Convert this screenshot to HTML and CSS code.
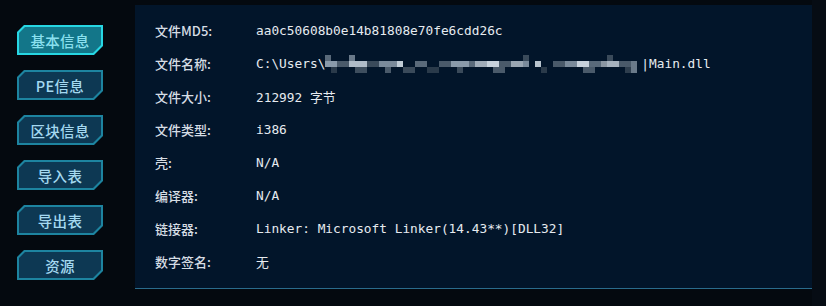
FILE: index.html
```html
<!DOCTYPE html>
<html lang="zh-CN">
<head>
<meta charset="utf-8">
<link rel="stylesheet" href="styles.css">
</head>
<body>
<div class="app">
  <nav class="sidebar">
    <div class="btn active"><div class="btn-inner">基本信息</div></div>
    <div class="btn"><div class="btn-inner">PE信息</div></div>
    <div class="btn"><div class="btn-inner">区块信息</div></div>
    <div class="btn"><div class="btn-inner">导入表</div></div>
    <div class="btn"><div class="btn-inner">导出表</div></div>
    <div class="btn"><div class="btn-inner">资源</div></div>
  </nav>
  <main class="panel">
    <div class="row"><span class="label">文件MD5:</span><span class="value">aa0c50608b0e14b81808e70fe6cdd26c</span></div>
    <div class="row"><span class="label">文件名称:</span><span class="value">C:\Users\<svg class="mosaic" width="316" height="24" viewBox="0 0 316 24">
      <rect x="0" y="3" width="6" height="6" fill="#5a6a7a"/>
      <rect x="0" y="9" width="12" height="6" fill="#8a9aaa"/>
      <rect x="6" y="15" width="6" height="6" fill="#2a3a4a"/>
      <rect x="12" y="9" width="12" height="6" fill="#4a5a6a"/>
      <rect x="24" y="3" width="6" height="6" fill="#6a7a8a"/>
      <rect x="24" y="9" width="18" height="6" fill="#b0bcc8"/>
      <rect x="30" y="15" width="12" height="6" fill="#3e4e5e"/>
      <rect x="42" y="9" width="12" height="6" fill="#3a4a5a"/>
      <rect x="54" y="9" width="18" height="6" fill="#7a8a9a"/>
      <rect x="60" y="15" width="6" height="6" fill="#4a5a6a"/>
      <rect x="72" y="9" width="6" height="6" fill="#c0ccd6"/>
      <rect x="78" y="15" width="12" height="6" fill="#3a4a5a"/>
      <rect x="90" y="9" width="12" height="6" fill="#5a6a7a"/>
      <rect x="102" y="15" width="12" height="6" fill="#2a3a4a"/>
      <rect x="114" y="9" width="12" height="6" fill="#4a5a6a"/>
      <rect x="126" y="9" width="18" height="6" fill="#8a9aaa"/>
      <rect x="132" y="15" width="6" height="6" fill="#3a4a5a"/>
      <rect x="144" y="9" width="6" height="6" fill="#5a6a7a"/>
      <rect x="150" y="9" width="12" height="6" fill="#a0acb8"/>
      <rect x="162" y="9" width="12" height="6" fill="#c8d2dc"/>
      <rect x="168" y="15" width="12" height="6" fill="#4a5a6a"/>
      <rect x="174" y="9" width="12" height="6" fill="#4a5a6a"/>
      <rect x="186" y="9" width="12" height="6" fill="#9aa6b2"/>
      <rect x="198" y="3" width="6" height="6" fill="#3a4a5a"/>
      <rect x="198" y="9" width="6" height="6" fill="#7a8a9a"/>
      <rect x="210" y="9" width="6" height="6" fill="#b8c4ce"/>
      <rect x="216" y="15" width="6" height="6" fill="#2a3a4a"/>
      <rect x="228" y="9" width="12" height="6" fill="#4a5a6a"/>
      <rect x="240" y="9" width="12" height="6" fill="#7a8a9a"/>
      <rect x="252" y="9" width="12" height="6" fill="#c8d2dc"/>
      <rect x="258" y="15" width="12" height="6" fill="#4a5a6a"/>
      <rect x="264" y="9" width="12" height="6" fill="#5a6a7a"/>
      <rect x="276" y="9" width="6" height="6" fill="#8a96a2"/>
      <rect x="282" y="3" width="6" height="6" fill="#3a4a5a"/>
      <rect x="282" y="9" width="12" height="6" fill="#a6b2be"/>
      <rect x="294" y="9" width="12" height="6" fill="#4a5a6a"/>
      <rect x="300" y="15" width="8" height="6" fill="#2e3e4e"/>
      <rect x="306" y="9" width="6" height="12" fill="#6a7a8a"/>
    </svg>|Main.dll</span></div>
    <div class="row"><span class="label">文件大小:</span><span class="value">212992 字节</span></div>
    <div class="row"><span class="label">文件类型:</span><span class="value">i386</span></div>
    <div class="row"><span class="label">壳:</span><span class="value">N/A</span></div>
    <div class="row"><span class="label">编译器:</span><span class="value">N/A</span></div>
    <div class="row"><span class="label">链接器:</span><span class="value">Linker: Microsoft Linker(14.43**)[DLL32]</span></div>
    <div class="row"><span class="label">数字签名:</span><span class="value">无</span></div>
  </main>
  <div class="edge"></div>
</div>
</body>
</html>
```
FILE: styles.css
```css
html, body {
  margin: 0;
  padding: 0;
  background: #04090f;
  width: 826px;
  height: 306px;
  overflow: hidden;
}
.app {
  display: flex;
  height: 306px;
}
.sidebar {
  width: 135px;
  flex: none;
  display: flex;
  flex-direction: column;
  gap: 15px;
  padding-top: 25px;
  padding-left: 17px;
  box-sizing: border-box;
}
.btn {
  width: 86px;
  height: 30px;
  padding: 2px;
  box-sizing: border-box;
  background: #1d84a0;
  clip-path: polygon(7px 0, 100% 0, 100% calc(100% - 9px), calc(100% - 9px) 100%, 0 100%, 0 7px);
}
.btn-inner {
  height: 100%;
  background: #0d3853;
  clip-path: polygon(6px 0, 100% 0, 100% calc(100% - 8px), calc(100% - 8px) 100%, 0 100%, 0 6px);
  display: flex;
  align-items: center;
  justify-content: center;
  font-family: "Noto Sans CJK SC", "Noto Sans", sans-serif;
  font-size: 14.5px;
  font-weight: 500;
  color: #a4d8f0;
  letter-spacing: 0.3px;
}
.btn.active {
  background: #27d7e3;
}
.btn.active .btn-inner {
  background: #137689;
  color: #8ae0ef;
}
.panel {
  width: 677px;
  flex: none;
  margin-top: 5px;
  height: 284px;
  box-sizing: border-box;
  background: #02152a;
  border-bottom: 1px solid #2a6b8c;
  padding: 9px 0 0 20px;
}
.edge {
  flex: 1;
  background: #060c14;
}
.row {
  display: flex;
  align-items: center;
  height: 33px;
}
.label {
  width: 101px;
  flex: none;
  font-family: "Noto Sans CJK SC", "Noto Sans", sans-serif;
  font-size: 13px;
  font-weight: 500;
  color: #d6dde4;
}
.value {
  font-family: "DejaVu Sans Mono", "Noto Sans CJK SC", monospace;
  font-size: 12.8px;
  color: #e6ebf0;
  display: flex;
  align-items: center;
  white-space: pre;
}
.mosaic {
  display: block;
  flex: none;
}
```
